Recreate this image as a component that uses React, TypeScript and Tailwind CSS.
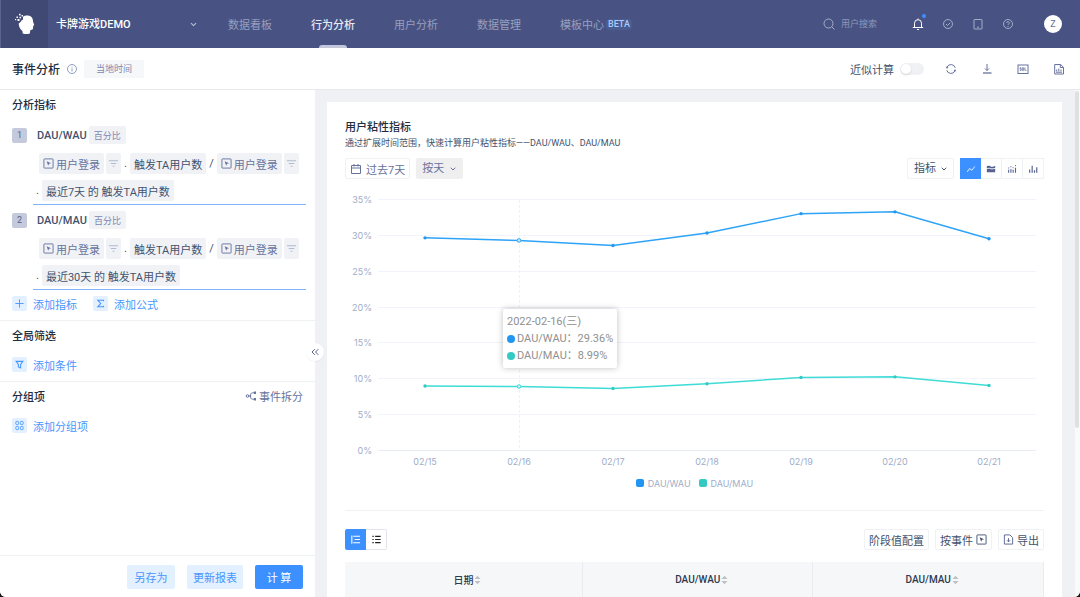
import { FC, ReactNode, useState } from "react";
import { ChevronDown, ChevronsLeft } from "lucide-react";

const navItems = ["数据看板", "行为分析", "用户分析", "数据管理", "模板中心"];

const dates = ["02/15", "02/16", "02/17", "02/18", "02/19", "02/20", "02/21"];

const series = [
  {
    name: "DAU/WAU",
    line: "#2ea3f7",
    color: "#2196f3",
    values: [29.72, 29.36, 28.66, 30.4, 33.1, 33.35, 29.6],
  },
  {
    name: "DAU/MAU",
    line: "#3fdcd6",
    color: "#33cac3",
    values: [9.06, 8.99, 8.72, 9.37, 10.25, 10.34, 9.15],
  },
];

const metrics = [
  { id: 1, name: "DAU/WAU", period: "最近7天 的 触发TA用户数" },
  { id: 2, name: "DAU/MAU", period: "最近30天 的 触发TA用户数" },
];

type IconProps = { size?: number; className?: string; children: ReactNode };

const Icon: FC<IconProps> = ({ size = 12, className, children }) => (
  <svg
    width={size}
    height={size}
    viewBox="0 0 12 12"
    fill="none"
    stroke="currentColor"
    strokeWidth="1"
    className={className}
    aria-hidden="true"
  >
    {children}
  </svg>
);

const EventIcon = () => (
  <Icon size={11} className="shrink-0">
    <rect x="1" y="1" width="10" height="10" rx="0.5" />
    <path d="M4 3.5 8.8 5.6 6.6 6.3 5.6 8.5Z" fill="currentColor" stroke="none" />
  </Icon>
);

const Logo = () => (
  <svg width="20" height="22" viewBox="0 0 20 22" fill="#fff" aria-hidden="true">
    <path d="M8 3.800C9.500 2.600 11 2.300 13 2.500c3.200.4 5 2.600 5 5.500 0 .8.200 1.300.5 2l.6 1.600c.2.600 0 .9-.8 1l-.3 2.600c-.1 1-.7 1.500-1.700 1.500l-1 .6-.5 3.200c-2.300.8-4.800.8-7 0l-.4-2.500C5 16.500 3.800 13.500 3.700 10.500L5.500 9l1-1.500L8 6.500Z" />
    <rect x="4" y=".8" width="1.600" height="1.600" />
    <rect x="1.500" y="3.500" width="1.500" height="1.500" />
    <rect x="2.500" y="6" width="2" height="2" />
    <rect x="4.500" y="3.800" width="1.600" height="1.600" />
    <rect x="6.500" y="2" width="1.500" height="1.500" />
    <rect x="0" y="6" width="1.200" height="1.200" />
  </svg>
);

const Header = () => (
  <header className="flex h-12 shrink-0 items-center bg-[#485384] text-[11px] text-white">
    <div className="flex h-12 w-12 shrink-0 items-center justify-center border-l border-[#5a6492] bg-[#3f4973]">
      <Logo />
    </div>
    <div className="relative flex w-[156px] shrink-0 items-center">
      <select
        aria-label="项目"
        className="h-6 w-full appearance-none bg-transparent pl-2 font-medium outline-none"
      >
        <option>卡牌游戏DEMO</option>
      </select>
      <ChevronDown
        size={9}
        strokeWidth={3}
        className="pointer-events-none absolute right-[6px] text-[#b6bbd1]"
      />
    </div>
    <nav className="ml-6 flex h-12 gap-[39px]">
      {navItems.map((item, index) => (
        <a
          key={item}
          href="#"
          className={
            index === 1
              ? "relative flex items-center font-medium whitespace-nowrap text-[#e6e8f0]"
              : "flex items-center whitespace-nowrap text-[#989fbd]"
          }
        >
          {item}
          {index === 1 && (
            <span className="absolute bottom-0 left-2 h-[3px] w-7 rounded-t-sm bg-[#c3c7db]" />
          )}
          {index === 4 && (
            <span className="ml-[2px] h-[11px] rounded-sm bg-[#4b5c92] px-[2px] text-[9px] leading-[11px] font-medium text-[#a9cbf8]">
              BETA
            </span>
          )}
        </a>
      ))}
    </nav>
    <div className="ml-auto flex shrink-0 items-center pr-[18px] text-[#a6acc6]">
      <label className="flex items-center gap-[6px]">
        <Icon>
          <circle cx="5.500" cy="5.500" r="4.500" />
          <path d="m9 9 2.500 2.500" />
        </Icon>
        <input
          type="text"
          aria-label="用户搜索"
          placeholder="用户搜索"
          className="w-[71px] bg-transparent text-[9px] outline-none placeholder:text-[#8f97b8]"
        />
      </label>
      <div className="flex items-center gap-[18px]">
        <button aria-label="通知" className="relative text-white">
          <Icon>
            <path d="M2.500 9.500V5.200a3.500 3.500 0 0 1 7 0v4.300M.8 9.500h10.400M5 11.500h2M6 .5v1" />
          </Icon>
          <span className="absolute -top-[4px] -right-[2px] h-1 w-1 rounded-full bg-[#3d90ff]" />
        </button>
        <button aria-label="任务">
          <Icon>
            <circle cx="6" cy="6" r="4.500" />
            <path d="m4 6 1.500 1.500L8.200 4.800" />
          </Icon>
        </button>
        <button aria-label="移动端">
          <Icon>
            <rect x="2" y="1.500" width="8" height="9.500" rx="0.5" />
            <path d="M5 9.200h2" />
          </Icon>
        </button>
        <button aria-label="帮助">
          <Icon>
            <circle cx="6" cy="6" r="4.500" />
            <path d="M4.700 5a1.300 1.300 0 1 1 1.800 1.200q-.5.200-.5.900M6 8v.8" />
          </Icon>
        </button>
      </div>
      <button className="ml-[30px] h-[18px] w-[18px] rounded-full bg-white text-[9px] leading-[18px] text-[#67729d]">
        Z
      </button>
    </div>
  </header>
);

const TitleBar = () => (
  <div className="flex h-[42px] shrink-0 items-center border-b border-[#e9e9ec] bg-white pr-[15px] pl-3">
    <h1 className="text-[12px] font-medium text-[#202d3f]">事件分析</h1>
    <Icon className="ml-[6px] text-[#8f9fc0]">
      <circle cx="6" cy="6" r="4.500" />
      <path d="M6 5.200V8.500M6 3.500v.8" />
    </Icon>
    <span className="ml-[6px] flex h-[18px] items-center bg-[#f6f7f9] px-3 text-[9px] text-[#7c87b1]">
      当地时间
    </span>
    <label className="ml-auto flex items-center gap-[6px] text-[11px] text-[#42526d]">
      近似计算
      <input type="checkbox" role="switch" className="peer sr-only" />
      <span className="flex h-3 w-6 rounded-full bg-[#f0f1f5] p-px peer-checked:justify-end peer-checked:bg-[#3d90ff]">
        <span className="h-[10px] w-[10px] rounded-full bg-white shadow-sm" />
      </span>
    </label>
    <div className="ml-[21px] flex gap-6 text-[#67729d]">
      <button aria-label="刷新">
        <Icon>
          <path d="M10.300 4.800A4.500 4.500 0 0 0 2 4M1.700 7.200A4.500 4.500 0 0 0 10 8" />
          <path d="M.8 3.700h2.700L2 6ZM11.200 8.300H8.500L10 6Z" fill="currentColor" stroke="none" />
        </Icon>
      </button>
      <button aria-label="下载">
        <Icon>
          <path d="M6 1v6.500M4 5.500l2 2 2-2" />
          <path d="M2 10h8.500" strokeWidth="1.300" />
        </Icon>
      </button>
      <button aria-label="SQL">
        <Icon>
          <rect x="1" y="2" width="10" height="8.500" />
          <path d="M4.300 4.800H3v1.200h1.200v1.300H2.800M5.300 4.800h1.400v2.500H5.300ZM7.900 4.500v2.800h1.500" strokeWidth="0.8" />
        </Icon>
      </button>
      <button aria-label="报告">
        <Icon>
          <path d="M1.700 1.500h6l2.800 2.800V11H1.700ZM7.300 1.500v3h3M3 9.200h6M3.700 8.300V6.500M5.800 8.300V5.500M8 8.300V6.500" />
        </Icon>
      </button>
    </div>
  </div>
);

const EventChip = () => (
  <div className="flex gap-[2px] text-[#67729d]">
    <button className="flex h-[21px] items-center gap-[2px] rounded-xs bg-[#f1f2f6] px-1 whitespace-nowrap">
      <EventIcon />
      用户登录
    </button>
    <button
      aria-label="筛选"
      className="flex h-[21px] w-[15px] items-center justify-center rounded-xs bg-[#f1f2f6] text-[#aebbd0]"
    >
      <Icon size={11}>
        <path d="M1 3h10M3 6h6M5 9h2" strokeWidth="1.200" />
      </Icon>
    </button>
  </div>
);

const Metric: FC<{ id: number; name: string; period: string }> = ({
  id,
  name,
  period,
}) => (
  <div className="flex gap-[6px] pr-[9px] pl-3">
    <span className="mt-2 h-[15px] w-[15px] shrink-0 rounded-xs bg-[#c5c9dc] text-center text-[9px] leading-[15px] text-[#56618f]">
      {id}
    </span>
    <div className="flex-1 border-b border-[#7fb4fb] text-[#42526d]">
      <div className="flex h-[30px] items-center gap-[2px] pl-1">
        <span className="font-medium">{name}</span>
        <button className="flex h-[18px] items-center rounded-xs bg-[#f1f2f6] px-[5px] text-[9px] text-[#7c87b1]">
          百分比
        </button>
      </div>
      <div className="flex h-[27px] items-center gap-[3px] pl-[6px]">
        <EventChip />
        <span>.</span>
        <button className="h-[21px] rounded-xs bg-[#f1f2f6] px-1 whitespace-nowrap">
          触发TA用户数
        </button>
        <span>/</span>
        <EventChip />
      </div>
      <div className="flex h-[27px] items-center gap-[3px] pl-[3px]">
        <span>.</span>
        <button className="h-[21px] rounded-xs bg-[#f1f2f6] px-1">{period}</button>
      </div>
    </div>
  </div>
);

const AddButton: FC<{ label: string; children: ReactNode }> = ({
  label,
  children,
}) => (
  <button className="flex items-center gap-[6px] text-[#4896fd]">
    <span className="flex h-[15px] w-[15px] items-center justify-center rounded-xs bg-[#e2f0ff]">
      {children}
    </span>
    {label}
  </button>
);

const SectionTitle: FC<{ title: string; children?: ReactNode }> = ({
  title,
  children,
}) => (
  <div className="mb-[2px] flex h-7 items-center justify-between px-3">
    <h2 className="font-medium text-[#202d3f]">{title}</h2>
    {children}
  </div>
);

const Sidebar = () => (
  <aside className="relative flex w-[315px] shrink-0 flex-col bg-white text-[11px]">
    <section className="border-b border-[#f0f1f5] pb-[3px]">
      <SectionTitle title="分析指标" />
      {metrics.map((metric) => (
        <Metric key={metric.id} {...metric} />
      ))}
      <div className="flex h-[27px] items-center gap-4 pl-3">
        <AddButton label="添加指标">
          <Icon size={11}>
            <path d="M6 1.500v9M1.500 6h9" />
          </Icon>
        </AddButton>
        <AddButton label="添加公式">
          <Icon size={9}>
            <path d="M10 3V1.700H2.500L6.300 6l-3.800 4.300H10V9" strokeWidth="1.500" />
          </Icon>
        </AddButton>
      </div>
    </section>
    <section className="border-b border-[#f0f1f5] pb-[3px]">
      <SectionTitle title="全局筛选" />
      <div className="flex h-[27px] items-center pl-3">
        <AddButton label="添加条件">
          <Icon size={9}>
            <path d="M1.500 1.800h9L7.500 6v4.500l-3-1.200V6Z" strokeWidth="1.400" />
          </Icon>
        </AddButton>
      </div>
    </section>
    <section>
      <SectionTitle title="分组项">
        <button className="flex items-center gap-[2px] text-[#67729d]">
          <Icon>
            <circle cx="2.500" cy="6" r="1.300" />
            <path d="M3.800 6h1.700M9 2.800H7.500C6 2.800 5.500 4 5.500 6s.5 3.200 2 3.200H9" />
            <path d="M9 1.500h2v2.500H9ZM9 8h2v2.500H9Z" fill="currentColor" stroke="none" />
          </Icon>
          事件拆分
        </button>
      </SectionTitle>
      <div className="flex h-[27px] items-center pl-3">
        <AddButton label="添加分组项">
          <Icon size={11}>
            <rect x="2" y="1.500" width="3" height="3.500" rx="1" />
            <rect x="7" y="1.500" width="3" height="3.500" rx="1" />
            <rect x="2" y="7" width="3" height="3.500" rx="1" />
            <rect x="7" y="7" width="3" height="3.500" rx="1" />
          </Icon>
        </AddButton>
      </div>
    </section>
    <footer className="mt-auto flex h-[42px] items-center justify-end gap-3 border-t border-[#f0f1f5] pr-3">
      <button className="h-6 w-12 rounded-xs bg-[#e2f0ff] text-[#4896fd]">另存为</button>
      <button className="h-6 w-14 rounded-xs bg-[#e2f0ff] text-[#4896fd]">更新报表</button>
      <button className="h-6 w-12 rounded-xs bg-[#3d90ff] text-white">计 算</button>
    </footer>
    <button
      aria-label="收起"
      className="absolute top-[253px] -right-[9px] z-10 flex h-[18px] w-[18px] items-center justify-center rounded-full bg-white text-[#56618f] shadow-xs"
    >
      <ChevronsLeft size={12} />
    </button>
  </aside>
);

const CHART_WIDTH = 699;
const CHART_HEIGHT = 280;
const pointX = (index: number) => 80 + index * 94;
const pointY = (value: number) => 261 - (value * 251) / 35;

const Chart = () => {
  const [active] = useState(1);

  return (
    <div className="relative mt-[11px]">
      <svg
        viewBox={`0 0 ${CHART_WIDTH} ${CHART_HEIGHT}`}
        className="block w-full font-['Inter',sans-serif]"
        fontSize="9"
        fill="#a0adc9"
      >
        {[0, 5, 10, 15, 20, 25, 30, 35].map((tick) => (
          <g key={tick}>
            <path
              d={`M33 ${Math.round(pointY(tick)) - 0.5}H691`}
              stroke={tick === 0 ? "#e8ecf5" : "#f1f4fa"}
            />
            <text x="27" y={pointY(tick) + 3} textAnchor="end">
              {tick}%
            </text>
          </g>
        ))}
        <path
          d={`M${pointX(active) + 0.5} 10V261`}
          stroke="#eef1f6"
          strokeDasharray="3 2"
        />
        {dates.map((date, index) => (
          <text key={date} x={pointX(index)} y="275" textAnchor="middle">
            {date}
          </text>
        ))}
        {series.map(({ name, line, color, values }) => (
          <g key={name}>
            <polyline
              points={values.map((v, i) => `${pointX(i)},${pointY(v)}`).join(" ")}
              fill="none"
              stroke={line}
              strokeWidth="1.500"
            />
            {values.map((v, i) => (
              <circle
                key={i}
                cx={pointX(i)}
                cy={pointY(v)}
                r={i === active ? 1.8 : 1.7}
                fill={i === active ? "#c9eefb" : color}
                stroke={i === active ? line : "none"}
              />
            ))}
          </g>
        ))}
      </svg>
      <div
        className="absolute top-[119px] rounded-xs bg-white px-1 py-1 text-[11px] leading-[17px] whitespace-nowrap text-[#909090] shadow-[0_0_6px_rgba(0,0,0,0.25)]"
        style={{ left: `${((pointX(active) - 16) / CHART_WIDTH) * 100}%` }}
      >
        <p>2022-02-16(三)</p>
        {series.map(({ name, color, values }) => (
          <p key={name} className="flex items-center gap-[2px]">
            <span className="h-2 w-2 rounded-full" style={{ background: color }} />
            {name}：{values[active]}%
          </p>
        ))}
      </div>
      <div className="flex h-[26px] items-center justify-center gap-2 font-['Inter',sans-serif] text-[9px] text-[#a0adc9]">
        {series.map(({ name, color }) => (
          <span key={name} className="flex items-center gap-1">
            <span className="h-2 w-2 rounded-xs" style={{ background: color }} />
            {name}
          </span>
        ))}
      </div>
    </div>
  );
};

const chartTypes = [
  {
    label: "趋势图",
    icon: <path d="M1.500 9.500 4.200 5.500 7 7.500 10.500 3" />,
  },
  {
    label: "堆积图",
    icon: (
      <path
        d="M1 2.500 4 2 7 3.500l4-1v2.300L7 5.500 4 4.500 1 5ZM1 6l3-.5 3 1 4-.7V10H1Z"
        fill="currentColor"
        stroke="none"
      />
    ),
  },
  {
    label: "累计图",
    icon: (
      <>
        <path d="M2 10.500V7M4.700 10.500V6M7.400 10.500V7M10.200 10.500V4.500" strokeWidth="1.300" />
        <path d="M1.500 4.800h1.200M4 3.300h1.200M6.700 4.500h1.200M9.600 2h1.200" strokeWidth="1.200" />
      </>
    ),
  },
  {
    label: "分布图",
    icon: <path d="M2 10.500V6.500M5 10.500V2M7.800 10.500V7.500M10.500 10.500V4" strokeWidth="1.400" />,
  },
];

const Sorter = () => (
  <svg width="7" height="10" viewBox="0 0 7 10" fill="#bfbfbf" aria-hidden="true">
    <path d="M.5 4 3.500.8 6.500 4ZM.5 6h6l-3 3.200Z" />
  </svg>
);

const Report = () => {
  const [chartType, setChartType] = useState(0);
  const outlined = "flex h-[21px] items-center rounded-xs border border-[#f0f1f5] px-1";

  return (
    <section className="flex-1 bg-white px-[18px] pt-[18px] text-[11px] text-[#42526d]">
      <h2 className="leading-4 font-medium text-[#202d3f]">用户粘性指标</h2>
      <p className="text-[9px] leading-[14px]">
        通过扩展时间范围，快速计算用户粘性指标——DAU/WAU、DAU/MAU
      </p>
      <div className="mt-2 flex items-center">
        <button className={`${outlined} gap-1 text-[#67729d]`}>
          <Icon>
            <path d="M1.500 2.500h9V10.500h-9ZM1.500 5h9M4 1v2.500M8 1v2.500" />
          </Icon>
          过去7天
        </button>
        <div className="relative ml-[6px] flex items-center text-[#67729d]">
          <select
            aria-label="时间粒度"
            className="h-[21px] w-[47px] appearance-none rounded-xs bg-[#efeff0] pl-[6px] outline-none"
          >
            <option>按天</option>
          </select>
          <ChevronDown size={8} strokeWidth={3} className="pointer-events-none absolute right-[6px]" />
        </div>
        <div className="relative ml-auto flex items-center">
          <select
            aria-label="指标"
            className="h-[21px] w-[47px] appearance-none rounded-xs border border-[#f0f1f5] bg-white pl-[6px] outline-none"
          >
            <option>指标</option>
          </select>
          <ChevronDown size={8} strokeWidth={3} className="pointer-events-none absolute right-[6px]" />
        </div>
        <div className="ml-[6px] flex">
          {chartTypes.map(({ label, icon }, index) => (
            <button
              key={label}
              aria-label={label}
              onClick={() => setChartType(index)}
              className={
                index === chartType
                  ? "flex h-[21px] w-[21px] items-center justify-center bg-[#3d90ff] text-white"
                  : "flex h-[21px] w-[21px] items-center justify-center border-y border-r border-[#f0f1f5] text-[#56618f]"
              }
            >
              <Icon size={10}>{icon}</Icon>
            </button>
          ))}
        </div>
      </div>
      <Chart />
      <div className="mt-[14px] flex items-center border-t border-[#f0f1f5] pt-[18px]">
        <button
          aria-label="分级列表"
          className="flex h-[21px] w-[21px] items-center justify-center rounded-l-xs bg-[#3d90ff] text-white"
        >
          <Icon size={11}>
            <path d="M2 1.500v9M5 2.500h6M5 6h6M5 9.500h6M3.500 2.500H5M3.500 9.500H5" strokeWidth="1.200" />
          </Icon>
        </button>
        <button
          aria-label="列表"
          className="flex h-[21px] w-[21px] items-center justify-center rounded-r-xs border-y border-r border-[#e3e4ea] text-[#202020]"
        >
          <Icon size={11}>
            <path d="M1.500 2.500H3M4.500 2.500h6M1.500 6H3M4.500 6h6M1.500 9.500H3M4.500 9.500h6" strokeWidth="1.300" />
          </Icon>
        </button>
        <div className="ml-auto flex gap-[6px]">
          <button className={outlined}>阶段值配置</button>
          <button className={`${outlined} gap-[3px]`}>
            按事件 <EventIcon />
          </button>
          <button className={`${outlined} gap-[3px]`}>
            <Icon size={11} className="text-[#56618f]">
              <path d="M1.500 1h6L10.500 4v7h-9ZM6 4.500V8.500M4.300 6.800 6 8.500l1.700-1.700" />
            </Icon>
            导出
          </button>
        </div>
      </div>
      <table className="mt-3 w-full table-fixed border-r border-[#e9ebf0] bg-[#f6f7f9] text-[10px] text-[#2c3a50]">
        <thead>
          <tr className="h-[35px]">
            {["日期", "DAU/WAU", "DAU/MAU"].map((title, index) => (
              <th
                key={title}
                scope="col"
                className={
                  index === 0
                    ? "w-[34%] pl-2 font-medium"
                    : "border-l border-[#e9ebf0] pl-2 font-medium"
                }
              >
                <button className="inline-flex items-center gap-px">
                  {title}
                  <Sorter />
                </button>
              </th>
            ))}
          </tr>
        </thead>
      </table>
    </section>
  );
};

export default function App() {
  return (
    <div className="h-screen bg-[#161616] font-['Roboto','Noto_Sans_CJK_SC',sans-serif] leading-[normal]">
      <div className="flex h-full flex-col overflow-hidden rounded-b-md bg-white">
        <Header />
        <TitleBar />
        <div className="flex min-h-0 flex-1">
          <Sidebar />
          <main className="flex min-w-0 flex-1 overflow-hidden bg-[#f0f1f5] pt-3 pr-[13px] pl-3">
            <Report />
          </main>
          <div className="flex w-[5px] bg-[#fafafa] pt-px">
            <div className="h-2/3 w-1 rounded-full bg-[#e0e0e0]" />
          </div>
        </div>
      </div>
    </div>
  );
}
